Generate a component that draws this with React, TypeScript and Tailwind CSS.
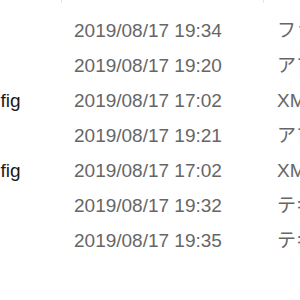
import React from "react";

interface FileRow {
  name: string;
  modified: string;
  type: string;
}

// Details view, scrolled so the name column is mostly off to the left
const rows: FileRow[] = [
  { name: "locales", modified: "2019/08/17 19:34", type: "ファイル フォルダー" },
  { name: "app.exe", modified: "2019/08/17 19:20", type: "アプリケーション" },
  { name: "app.exe.config", modified: "2019/08/17 17:02", type: "XML Configuration File" },
  { name: "updater.exe", modified: "2019/08/17 19:21", type: "アプリケーション" },
  { name: "upd.exe.config", modified: "2019/08/17 17:02", type: "XML Configuration File" },
  { name: "readme.txt", modified: "2019/08/17 19:32", type: "テキスト ドキュメント" },
  { name: "license.txt", modified: "2019/08/17 19:35", type: "テキスト ドキュメント" },
];

const App = () => {
  return (
    <div
      className="w-[300px] h-[300px] overflow-hidden bg-white"
      style={{ fontFamily: '"Liberation Sans", "Noto Sans CJK JP", sans-serif' }}
    >
      <div className="-ml-[110px] w-[600px]">
        {/* header (scrolled up, only the bottom of the dividers shows) */}
        <div className="flex h-[40px] -mt-[37px]">
          <div className="w-[172px] shrink-0 border-r border-[#e5e5e5]" />
          <div className="w-[202px] shrink-0 border-r border-[#e5e5e5]" />
          <div className="flex-1" />
        </div>

        <div className="mt-[11px]">
          {rows.map((row, i) => (
            <div key={i} className="flex h-[35px] items-center text-[19px] whitespace-nowrap">
              <div className="w-[184px] shrink-0 pl-[7px] text-[#1a1a1a]">{row.name}</div>
              <div className="w-[203px] shrink-0 text-[#666666]">{row.modified}</div>
              <div className="text-[#666666]">{row.type}</div>
            </div>
          ))}
        </div>
      </div>
    </div>
  );
};

export default App;
